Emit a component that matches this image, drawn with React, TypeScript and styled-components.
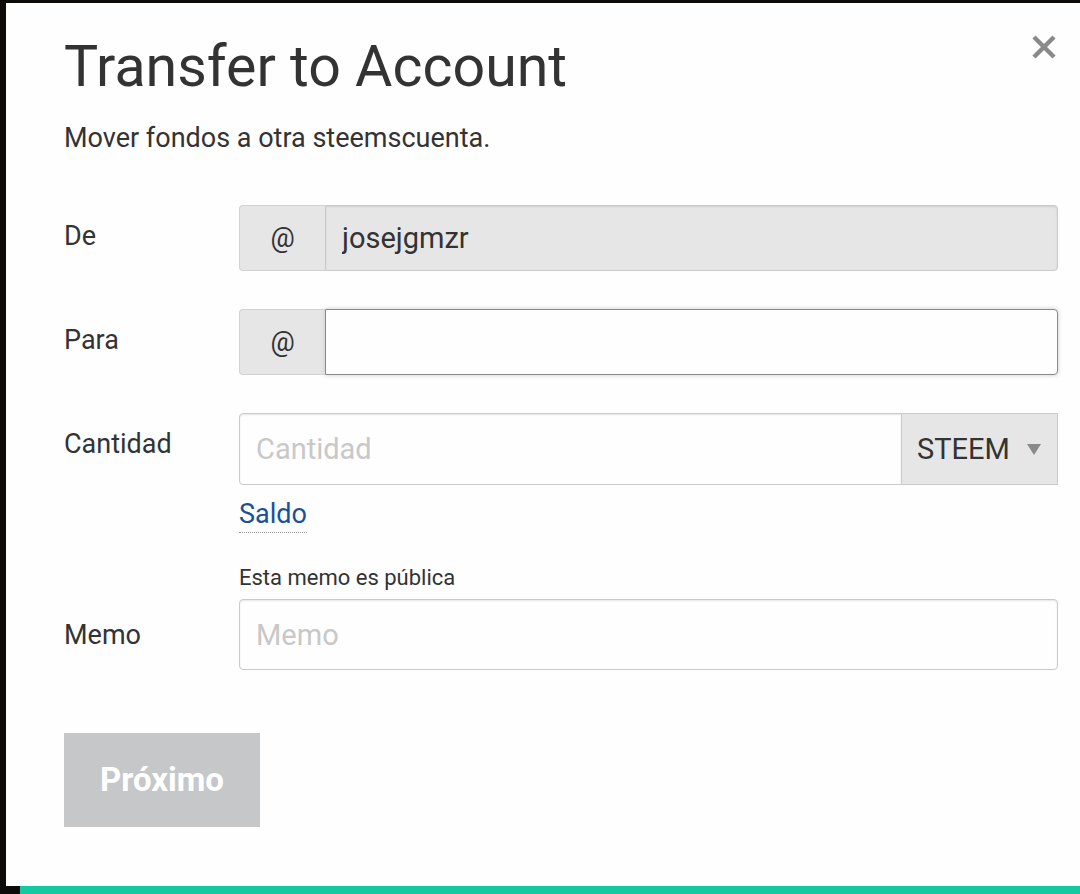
import React, { useState } from 'react'
import styled, { createGlobalStyle } from 'styled-components'

const GlobalStyle = createGlobalStyle`
  html, body {
    margin: 0;
    padding: 0;
    background: #0c0b0a;
    font-family: Roboto, "Liberation Sans", sans-serif;
    color: #333333;
  }
`

const Page = styled.div`
  width: 1080px;
  height: 894px;
  overflow: hidden;
  padding: 3px 0 0 6px;
  box-sizing: border-box;
`

const Modal = styled.div`
  position: relative;
  height: 883px;
  background: #fefefe;
  box-sizing: border-box;
  padding: 27px 22px 0 58px;
`

const FooterStrip = styled.div`
  height: 10px;
  margin-left: 14px;
  background: #13c9a1;
`

const Close = styled.button`
  position: absolute;
  top: 28px;
  right: 20px;
  width: 32px;
  height: 32px;
  padding: 0;
  border: none;
  background: none;
  cursor: pointer;
`

const Title = styled.h1`
  margin: 0;
  font-size: 57.3px;
  font-weight: 400;
  line-height: 74px;
  color: #333333;
`

const Subtitle = styled.p`
  margin: 16px 0 0;
  font-size: 27px;
  line-height: 36px;
  color: #333333;
`

const Form = styled.div`
  margin-top: 49px;
  display: flex;
  flex-direction: column;
`

const Row = styled.div<{ $gap?: number }>`
  display: grid;
  grid-template-columns: 175px 1fr;
  align-items: start;
  margin-bottom: ${p => p.$gap ?? 38}px;
`

const Label = styled.label<{ $top?: number }>`
  font-size: 27px;
  line-height: 36px;
  padding-top: ${p => p.$top ?? 13}px;
  color: #333333;
`

const Group = styled.div`
  display: flex;
  height: 66px;
`

const Addon = styled.span`
  width: 86px;
  flex: none;
  display: flex;
  align-items: center;
  justify-content: center;
  background: #e6e6e6;
  border: 1px solid #d2d2d2;
  border-right: none;
  border-radius: 4px 0 0 4px;
  font-size: 27px;
  color: #333333;
  box-sizing: border-box;
`

const Field = styled.input<{ $active?: boolean; $readonly?: boolean }>`
  flex: 1;
  min-width: 0;
  height: 100%;
  box-sizing: border-box;
  margin: 0;
  padding: 0 16px;
  font-family: inherit;
  font-size: 29px;
  color: #333333;
  background: ${p => (p.$readonly ? '#e6e6e6' : '#fefefe')};
  border: 1px solid ${p => (p.$active ? '#8a8a8a' : '#cacaca')};
  border-radius: 0 4px 4px 0;
  box-shadow: ${p => (p.$active ? '0 0 5px #cacaca' : 'inset 0 1px 2px rgba(10,10,10,0.1)')};
  outline: none;

  &::placeholder {
    color: #c8c8c8;
  }
`

const AmountGroup = styled.div`
  display: flex;
  height: 72px;
`

const AmountField = styled(Field)`
  border-radius: 4px 0 0 4px;
`

const Select = styled.div`
  width: 156px;
  flex: none;
  box-sizing: border-box;
  display: flex;
  align-items: center;
  justify-content: space-between;
  padding: 0 16px 0 15px;
  background: #e6e6e6;
  border: 1px solid #cacaca;
  border-left: none;
  font-size: 29px;
  color: #333333;
`

const Caret = styled.span`
  width: 0;
  height: 0;
  border-left: 7px solid transparent;
  border-right: 7px solid transparent;
  border-top: 11px solid #8a8a8a;
`

const BalanceLink = styled.a`
  display: inline-block;
  margin-top: 14px;
  padding-bottom: 3px;
  font-size: 27px;
  line-height: 30px;
  color: #1a5099;
  text-decoration: none;
  border-bottom: 1px dotted #9a9a9a;
`

const Note = styled.div`
  font-size: 22px;
  line-height: 24px;
  margin-bottom: 9px;
  color: #333333;
`

const MemoField = styled(Field)`
  width: 100%;
  height: 71px;
  border-radius: 4px;
`

const Submit = styled.button`
  margin-top: 63px;
  align-self: flex-start;
  width: 196px;
  height: 94px;
  border: none;
  padding-bottom: 3px;
  background: #c6c7c9;
  color: #ffffff;
  font-family: inherit;
  font-size: 33px;
  font-weight: 700;
  cursor: not-allowed;
`

const App: React.FC = () => {
  const [to, setTo] = useState('')
  const [amount, setAmount] = useState('')
  const [memo, setMemo] = useState('')

  return (
    <>
      <GlobalStyle />
      <Page>
        <Modal>
          <Close aria-label="Close">
            <svg width="32" height="32" viewBox="0 0 32 32">
              <path d="M6 6 L26 26 M26 6 L6 26" stroke="#8a8a8a" strokeWidth="4.5" />
            </svg>
          </Close>
          <Title>Transfer to Account</Title>
          <Subtitle>Mover fondos a otra steemscuenta.</Subtitle>
          <Form>
            <Row>
              <Label>De</Label>
              <Group>
                <Addon>@</Addon>
                <Field $readonly readOnly value="josejgmzr" />
              </Group>
            </Row>
            <Row>
              <Label>Para</Label>
              <Group>
                <Addon>@</Addon>
                <Field $active value={to} onChange={e => setTo(e.target.value)} />
              </Group>
            </Row>
            <Row $gap={33}>
              <Label>Cantidad</Label>
              <div>
                <AmountGroup>
                  <AmountField
                    placeholder="Cantidad"
                    value={amount}
                    onChange={e => setAmount(e.target.value)}
                  />
                  <Select>
                    STEEM
                    <Caret />
                  </Select>
                </AmountGroup>
                <BalanceLink>Saldo</BalanceLink>
              </div>
            </Row>
            <Row $gap={0}>
              <Label $top={51}>Memo</Label>
              <div>
                <Note>Esta memo es pública</Note>
                <MemoField
                  placeholder="Memo"
                  value={memo}
                  onChange={e => setMemo(e.target.value)}
                />
              </div>
            </Row>
            <Submit disabled>Próximo</Submit>
          </Form>
        </Modal>
        <FooterStrip />
      </Page>
    </>
  )
}

export default App
